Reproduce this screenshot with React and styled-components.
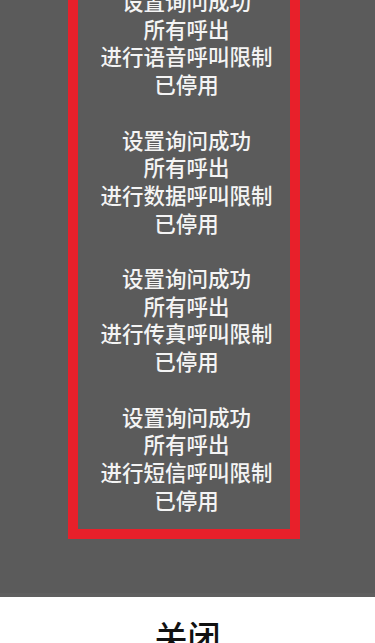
import React from "react";
import styled, { createGlobalStyle } from "styled-components";

const Global = createGlobalStyle`
  html, body { margin: 0; padding: 0; background: #ffffff; }
  body { font-family: "Noto Sans CJK SC", "Noto Sans", sans-serif; }
  #root { width: 375px; height: 643px; overflow: hidden; }
`;

const Screen = styled.div`
  width: 375px;
  height: 643px;
  display: flex;
  flex-direction: column;
  overflow: hidden;
  background: #ffffff;
`;

const Dialog = styled.div`
  height: 597px;
  flex: none;
  background: #5b5b5b;
  overflow: hidden;
  display: flex;
  flex-direction: column;
  box-shadow: inset 0 -4px 0 #5f5f5f;
`;

const Highlight = styled.div`
  width: 232px;
  box-sizing: border-box;
  margin: -13px 0 0 68px;
  border: 10px solid #e8202a;
  border-top: none;
  padding: 0 0 16px 5px;
  display: flex;
  flex-direction: column;
  gap: 27.7px;
`;

const Message = styled.p`
  margin: 0;
  color: #f4f4f4;
  font-size: 21.5px;
  font-weight: 500;
  line-height: 27.7px;
  text-align: center;
  white-space: pre-line;
  letter-spacing: 0;
`;

const Footer = styled.div`
  flex: 1;
  display: flex;
  justify-content: center;
  padding-top: 19px;
`;

const CloseButton = styled.button`
  border: none;
  background: none;
  padding: 0;
  font-family: "Noto Sans CJK SC", "Noto Sans", sans-serif;
  font-size: 33px;
  font-weight: 500;
  line-height: 40px;
  color: #111111;
  height: 40px;
`;

const messages = ["语音", "数据", "传真", "短信"];

export default function App() {
  return (
    <>
      <Global />
      <Screen>
        <Dialog>
          <Highlight>
            {messages.map((m) => (
              <Message key={m}>{`设置询问成功\n所有呼出\n进行${m}呼叫限制\n已停用`}</Message>
            ))}
          </Highlight>
        </Dialog>
        <Footer>
          <CloseButton>关闭</CloseButton>
        </Footer>
      </Screen>
    </>
  );
}
